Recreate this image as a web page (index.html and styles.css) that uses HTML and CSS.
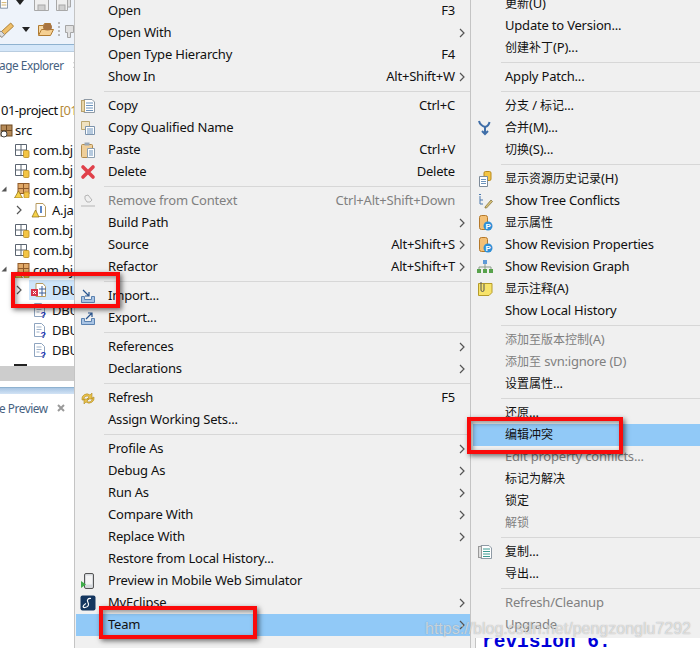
FILE: index.html
```html
<!DOCTYPE html>
<html lang="zh">
<head>
<meta charset="utf-8">
<title>Team menu</title>
<link rel="stylesheet" href="styles.css">
</head>
<body>
<svg class="defs" width="0" height="0">
  <defs>
    <symbol id="pkg" viewBox="0 0 16 16"><path d="M1.500 2.500h11v11h-11zM7 2.500v11M1.500 8h11" fill="#fff" stroke="#5a6470"/><rect x="9.500" y="8.500" width="5.500" height="7" rx="1" fill="#f3c545" stroke="#b98a1e" stroke-width=".8"/></symbol>
    <symbol id="pkgw" viewBox="0 0 16 16"><rect x="4" y="1.500" width="11" height="10" fill="#e0a867" stroke="#8f5a2a"/><path d="M9.500 1.500v10M4 6.500h11" stroke="#8f5a2a"/><path d="M4.500 9 8.500 16H.5z" fill="#f6d24a" stroke="#8a6b10" stroke-width=".7"/><rect x="10" y="10" width="5" height="6" rx="1" fill="#f3c545" stroke="#b98a1e" stroke-width=".8"/></symbol>
    <symbol id="unk" viewBox="0 0 16 16"><path d="M2.500 1.500h7l3 3v10h-10z" fill="#fff" stroke="#8ea4bf"/><path d="M4.500 5h5M4.500 7.500h5M4.500 10h3" stroke="#9fb3ca"/><text x="8.500" y="15.500" font-size="9" font-weight="700" fill="#1a2fb5" font-family="Liberation Sans">?</text></symbol>
    <symbol id="doc" viewBox="0 0 16 16"><path d="M4 1.500h8l2.500 2.500v10.500H4z" fill="#fff" stroke="#8f9aa5"/><rect x="1.500" y="2.500" width="3" height="11" fill="#e8d5a8" stroke="#b9a26d"/><path d="M6 5h7M6 7.500h7M6 10h7M6 12.500h7" stroke="#6d94bd"/></symbol>
    <symbol id="arrow" viewBox="0 0 6 10"><path d="M1 1l4 4-4 4" fill="none" stroke="#555" stroke-width="1.200"/></symbol>
    <symbol id="close" viewBox="0 0 8 8"><path d="M1 1l6 6M7 1L1 7" stroke="#9a9a9a" stroke-width="2"/></symbol>
  </defs>
</svg>
<div class="stage">
  <aside class="side">
    <div class="toolbar">
      <div class="tb-row tb-row-top">
        <svg class="tb-doc" viewBox="0 0 10 10"><path d="M.5-4h9v13h-9z" fill="#fff" stroke="#6a7c92"/><path d="M2 2h6M2 5h6" stroke="#c9a24a"/></svg>
        <span class="tb-tri"></span>
        <svg class="tb-save" viewBox="0 0 15 11"><path d="M.5-4h14v14.500H.5z" fill="#efefef" stroke="#a8a8a8"/><rect x="4" y="5" width="7" height="5.500" fill="#d0d0d0" stroke="#a8a8a8"/></svg>
        <svg class="tb-save" viewBox="0 0 15 11"><path d="M3.500-4h11v11h-11z" fill="#ddd" stroke="#a8a8a8"/><path d="M.5-2h11v12.500H.5z" fill="#efefef" stroke="#a8a8a8"/><rect x="3" y="5" width="6" height="5.500" fill="#d0d0d0" stroke="#a8a8a8"/></svg>
      </div>
      <div class="tb-row tb-row-main">
        <svg class="tb-pencil" viewBox="0 0 15 16"><path d="M-2 13l4 2.500L14.500 4l-3-3.500z" fill="#efbf6a" stroke="#a8782a"/><path d="M-2 12l3-3 4 4-3 3z" fill="#ddd" stroke="#888"/></svg>
        <span class="tb-tri"></span>
        <svg class="tb-open" viewBox="0 0 16 13"><path d="M.5 2.500h5l1-2h6v11H.5z" fill="#f6d9a6" stroke="#b07a30"/><path d="M.5 12.500l3-6h12l-3 6z" fill="#f4cf92" stroke="#b07a30"/><ellipse cx="9.500" cy="4" rx="4.500" ry="3.500" fill="#a87440"/></svg>
        <span class="tb-grip"></span>
        <svg class="tb-disabled" viewBox="0 0 10 16"><path d="M1.500 2.500h8v7h-3v5h-3v-5h-2z" fill="#e0e0e0" stroke="#a5a5a5"/></svg>
      </div>
      <div class="tb-foot"></div>
    </div>
    <div class="tab-row"><span class="tab-label">age Explorer</span><svg class="tab-x"><use href="#close"/></svg></div>
    <div class="tree">
      <div class="t-row t-project"><span>01-project</span> <span class="t-tag">[01</span></div>
      <div class="t-row t-l1"><svg class="t-ico" viewBox="0 0 16 16"><rect x="3" y="3" width="11" height="11" fill="#b58a58" stroke="#6f4a22"/><path d="M8.500 3v11M3 8.500h11" stroke="#6f4a22"/><circle cx="6" cy="12" r="3" fill="#fff" stroke="#444"/></svg><span>src</span></div>
      <div class="t-row t-l2"><svg class="t-ico"><use href="#pkg"/></svg><span>com.bj</span></div>
      <div class="t-row t-l2"><svg class="t-ico"><use href="#pkg"/></svg><span>com.bj</span></div>
      <div class="t-row t-l2"><svg class="t-chev" viewBox="0 0 6 6"><path d="M5.500.5v5h-5z" fill="#555"/></svg><svg class="t-ico"><use href="#pkgw"/></svg><span>com.bj</span></div>
      <div class="t-row t-l3"><svg class="t-arrow"><use href="#arrow"/></svg><svg class="t-ico" viewBox="0 0 16 16"><path d="M5 1.500h7l2.500 3v10H5z" fill="#fff" stroke="#b79a5e"/><path d="M4.500 8 8 15H1z" fill="#f6d24a" stroke="#8a6b10" stroke-width=".7"/><path d="M10 4v7" stroke="#2a5fb0" stroke-width="1.500"/></svg><span>A.ja</span></div>
      <div class="t-row t-l2"><svg class="t-ico"><use href="#pkg"/></svg><span>com.bj</span></div>
      <div class="t-row t-l2"><svg class="t-ico"><use href="#pkg"/></svg><span>com.bj</span></div>
      <div class="t-row t-l2"><svg class="t-chev" viewBox="0 0 6 6"><path d="M5.500.5v5h-5z" fill="#555"/></svg><svg class="t-ico"><use href="#pkgw"/></svg><span>com.bj</span></div>
      <div class="t-row t-l3 t-sel"><svg class="t-arrow"><use href="#arrow"/></svg><svg class="t-ico" viewBox="0 0 16 16"><path d="M5 1.500h7l2.500 3v10H5z" fill="#fff" stroke="#b79a5e"/><rect x="0" y="7" width="7" height="7" fill="#d8324a"/><path d="M2 9l3 3M5 9l-3 3" stroke="#fff"/><path d="M8 7h7M11 4v10M8 11h7" stroke="#3a5f9a"/></svg><span>DBU</span></div>
      <div class="t-row t-l4"><svg class="t-ico"><use href="#unk"/></svg><span>DBU</span></div>
      <div class="t-row t-l4"><svg class="t-ico"><use href="#unk"/></svg><span>DBU</span></div>
      <div class="t-row t-l4"><svg class="t-ico"><use href="#unk"/></svg><span>DBU</span></div>
      <div class="t-row t-cut"><span class="t-cut-bar"></span></div>
    </div>
    <div class="scroll-band"></div>
    <div class="view-strip"></div>
    <div class="tab-row tab-row-2"><span class="tab-label">e Preview</span><svg class="tab-x"><use href="#close"/></svg></div>
  </aside>

  <nav class="menu menu-main">
    <div class="item"><span class="label">Open</span><span class="key">F3</span></div>
    <div class="item"><span class="label">Open With</span><svg class="more"><use href="#arrow"/></svg></div>
    <div class="item"><span class="label">Open Type Hierarchy</span><span class="key">F4</span></div>
    <div class="item"><span class="label">Show In</span><span class="key">Alt+Shift+W</span><svg class="more"><use href="#arrow"/></svg></div>
    <div class="sep"></div>
    <div class="item"><svg class="ico"><use href="#doc"/></svg><span class="label">Copy</span><span class="key">Ctrl+C</span></div>
    <div class="item"><svg class="ico" viewBox="0 0 16 16"><path d="M1.500 1.500h8v8h-8z" fill="#f0e2c0" stroke="#bba670"/><path d="M5.500 6.500h9v8h-9z" fill="#fff" stroke="#7d94ad"/><path d="M7 9h6M7 11h6M7 13h6" stroke="#6d94bd"/></svg><span class="label">Copy Qualified Name</span></div>
    <div class="item"><svg class="ico" viewBox="0 0 16 16"><rect x="1.500" y="2.500" width="11" height="13" rx="1" fill="#efcf9a" stroke="#b08a4a"/><rect x="4.500" y=".5" width="5" height="3" fill="#9aa7b5"/><path d="M7.500 6.500h7v9h-7z" fill="#fff" stroke="#8fa0b0"/><path d="M9 9h4M9 11h4M9 13h4" stroke="#6d94bd"/></svg><span class="label">Paste</span><span class="key">Ctrl+V</span></div>
    <div class="item"><svg class="ico" viewBox="0 0 16 16"><path d="M3 3l10 10M13 3L3 13" stroke="#e0414a" stroke-width="3.600" stroke-linecap="round"/></svg><span class="label">Delete</span><span class="key">Delete</span></div>
    <div class="sep"></div>
    <div class="item off"><svg class="ico" viewBox="0 0 16 16"><path d="M5 3l3-1 4 5-2 2H7L5 6zM1 13h14" fill="none" stroke="#b5b5b5"/></svg><span class="label">Remove from Context</span><span class="key">Ctrl+Alt+Shift+Down</span></div>
    <div class="item"><span class="label">Build Path</span><svg class="more"><use href="#arrow"/></svg></div>
    <div class="item"><span class="label">Source</span><span class="key">Alt+Shift+S</span><svg class="more"><use href="#arrow"/></svg></div>
    <div class="item"><span class="label">Refactor</span><span class="key">Alt+Shift+T</span><svg class="more"><use href="#arrow"/></svg></div>
    <div class="sep"></div>
    <div class="item"><svg class="ico" viewBox="0 0 16 16"><path d="M1.500 8.500v6h13v-6h-3v3h-7v-3z" fill="#a9c4e4" stroke="#5b82b0"/><path d="M3 2l6 6M9 4v4H5" fill="none" stroke="#28558f" stroke-width="1.200"/></svg><span class="label">Import...</span></div>
    <div class="item"><svg class="ico" viewBox="0 0 16 16"><path d="M1.500 8.500v6h13v-6h-3v3h-7v-3z" fill="#a9c4e4" stroke="#5b82b0"/><path d="M6 9l6-6M8 3h4v4" fill="none" stroke="#28558f" stroke-width="1.200"/></svg><span class="label">Export...</span></div>
    <div class="sep"></div>
    <div class="item"><span class="label">References</span><svg class="more"><use href="#arrow"/></svg></div>
    <div class="item"><span class="label">Declarations</span><svg class="more"><use href="#arrow"/></svg></div>
    <div class="sep"></div>
    <div class="item"><svg class="ico" viewBox="0 0 16 16"><path d="M2 10a5 5 0 0 1 8-5l2-2v6H7l2-2a3 3 0 0 0-5 3zM14 7a5 5 0 0 1-8 5l-2 2V9h5l-2 2a3 3 0 0 0 5-3z" fill="#e8c04a" stroke="#b08a20" stroke-width=".6"/></svg><span class="label">Refresh</span><span class="key">F5</span></div>
    <div class="item"><span class="label">Assign Working Sets...</span></div>
    <div class="sep"></div>
    <div class="item"><span class="label">Profile As</span><svg class="more"><use href="#arrow"/></svg></div>
    <div class="item"><span class="label">Debug As</span><svg class="more"><use href="#arrow"/></svg></div>
    <div class="item"><span class="label">Run As</span><svg class="more"><use href="#arrow"/></svg></div>
    <div class="item"><span class="label">Compare With</span><svg class="more"><use href="#arrow"/></svg></div>
    <div class="item"><span class="label">Replace With</span><svg class="more"><use href="#arrow"/></svg></div>
    <div class="item"><span class="label">Restore from Local History...</span></div>
    <div class="item"><svg class="ico" viewBox="0 0 16 16"><rect x="4.500" y=".5" width="9" height="15" rx="1.500" fill="#d5d8dc" stroke="#555"/><rect x="6" y="2.500" width="6" height="9" fill="#f4f4f4"/><path d="M1 8l5 3.500L1 15z" fill="#3fae4a"/></svg><span class="label">Preview in Mobile Web Simulator</span></div>
    <div class="item"><svg class="ico" viewBox="0 0 16 16"><rect x=".5" y=".5" width="15" height="15" rx="2" fill="#14365f"/><path d="M11 3.500C8 3 6.500 5 8 7.500S8 12 5 12.500 3 10 6 8.500" fill="none" stroke="#fff" stroke-width="1.200"/></svg><span class="label">MyEclipse</span><svg class="more"><use href="#arrow"/></svg></div>
    <div class="item hot"><span class="label">Team</span><svg class="more"><use href="#arrow"/></svg></div>
  </nav>

  <nav class="menu menu-sub">
    <div class="item"><span class="label"><span class="cjk">更新</span>(U)</span></div>
    <div class="item"><span class="label">Update to Version...</span></div>
    <div class="item"><span class="label"><span class="cjk">创建补丁</span>(P)...</span></div>
    <div class="sep"></div>
    <div class="item"><span class="label">Apply Patch...</span></div>
    <div class="sep"></div>
    <div class="item"><span class="label"><span class="cjk">分支</span> / <span class="cjk">标记</span>...</span></div>
    <div class="item"><svg class="ico" viewBox="0 0 16 16"><path d="M2 1c1 4 3 5 6 6 2-.5 4-2 4.500-5M8 7v7M5 11l3 3 3-3" fill="none" stroke="#3f6ea8" stroke-width="2"/></svg><span class="label"><span class="cjk">合并</span>(M)...</span></div>
    <div class="item"><span class="label"><span class="cjk">切换</span>(S)...</span></div>
    <div class="sep"></div>
    <div class="item"><svg class="ico" viewBox="0 0 16 16"><rect x="7" y="0.500" width="7" height="9" rx="1.500" fill="#f3c545" stroke="#b98a1e"/><path d="M2.500 5.500h8v10h-8z" fill="#fff" stroke="#7d8a98"/><path d="M4 8.500h5M4 10.500h5M4 12.500h5" stroke="#6d94bd"/></svg><span class="label"><span class="cjk">显示资源历史记录</span>(H)</span></div>
    <div class="item"><svg class="ico" viewBox="0 0 16 16"><path d="M2 1.500h2M3 3v8h3M3 7h3" fill="none" stroke="#4a78ad"/><path d="M8 14l6-7 1.500 1.500-6 6.500H8z" fill="#d8c27a" stroke="#7d6a30" stroke-width=".7"/></svg><span class="label">Show Tree Conflicts</span></div>
    <div class="item"><svg class="ico" viewBox="0 0 16 16"><rect x="2.500" y=".5" width="8" height="14" rx="2" fill="#f3c076" stroke="#b5792a"/><circle cx="11" cy="11" r="4.500" fill="#2f8fd6"/><text x="11" y="14" text-anchor="middle" font-size="8" font-weight="700" fill="#fff" font-family="Liberation Sans">P</text></svg><span class="label"><span class="cjk">显示属性</span></span></div>
    <div class="item"><svg class="ico" viewBox="0 0 16 16"><rect x="2.500" y=".5" width="8" height="14" rx="2" fill="#f3c076" stroke="#b5792a"/><circle cx="11" cy="11" r="4.500" fill="#2f8fd6"/><text x="11" y="14" text-anchor="middle" font-size="8" font-weight="700" fill="#fff" font-family="Liberation Sans">P</text></svg><span class="label">Show Revision Properties</span></div>
    <div class="item"><svg class="ico" viewBox="0 0 16 16"><rect x="6" y="1" width="4" height="4" fill="#5f9bd8"/><path d="M8 5v3M2 8h12v2M2 8v2M8 8v2" fill="none" stroke="#8a9a8a"/><rect x="0" y="10" width="4" height="4" fill="#58a24c"/><rect x="6" y="10" width="4" height="4" fill="#58a24c"/><rect x="12" y="10" width="4" height="4" fill="#58a24c"/></svg><span class="label">Show Revision Graph</span></div>
    <div class="item"><svg class="ico" viewBox="0 0 16 16"><path d="M1.500 2.500h13.500v9l-3 3H1.500z" fill="#f7e36a" stroke="#b59b2a"/><path d="M4 1v8a1.500 1.500 0 0 0 3 0V3" fill="none" stroke="#555"/></svg><span class="label"><span class="cjk">显示注释</span>(A)</span></div>
    <div class="item"><span class="label">Show Local History</span></div>
    <div class="sep"></div>
    <div class="item off"><span class="label"><span class="cjk">添加至版本控制</span>(A)</span></div>
    <div class="item off"><span class="label"><span class="cjk">添加至</span> svn:ignore (D)</span></div>
    <div class="item"><span class="label"><span class="cjk">设置属性</span>...</span></div>
    <div class="sep"></div>
    <div class="item"><span class="label"><span class="cjk">还原</span>...</span></div>
    <div class="item hot"><span class="label"><span class="cjk">编辑冲突</span></span></div>
    <div class="item off"><span class="label">Edit property conflicts...</span></div>
    <div class="item"><span class="label"><span class="cjk">标记为解决</span></span></div>
    <div class="item"><span class="label"><span class="cjk">锁定</span></span></div>
    <div class="item off"><span class="label"><span class="cjk">解锁</span></span></div>
    <div class="sep"></div>
    <div class="item"><svg class="ico" viewBox="0 0 16 16"><path d="M4 1.500h8l2.500 2.500v10.500H4z" fill="#fff" stroke="#8f9aa5"/><rect x="1.500" y="2.500" width="3" height="11" fill="#ddd" stroke="#999"/><path d="M6 5h7M6 7.500h7M6 10h7M6 12.500h7" stroke="#3d9a92"/></svg><span class="label"><span class="cjk">复制</span>...</span></div>
    <div class="item"><span class="label"><span class="cjk">导出</span>...</span></div>
    <div class="sep"></div>
    <div class="item off"><span class="label">Refresh/Cleanup</span></div>
    <div class="item off"><span class="label">Upgrade</span></div>
    <div class="code-peek">revision 6.</div>
  </nav>

  <div class="mark mark-tree"></div>
  <div class="mark mark-team"></div>
  <div class="mark mark-edit"></div>
  <div class="watermark">https://blog.csdn.net/pengzonglu7292</div>
</div>
</body>
</html>
```
FILE: styles.css
```css
* { box-sizing: border-box; }
html, body { margin: 0; height: 100%; overflow: hidden; background: #fff; }
.defs { position: absolute; }
.stage {
  position: relative;
  display: flex;
  width: 700px;
  height: 648px;
  overflow: hidden;
  font-family: "Noto Sans", "Noto Sans CJK SC", sans-serif;
  font-size: 13px;
  letter-spacing: -.2px;
  color: #111;
}
.cjk { font-family: "Noto Sans CJK SC", sans-serif; font-size: 12px; letter-spacing: 0; }
.side { width: 74px; flex: none; display: flex; flex-direction: column; background: #fff; overflow: hidden; }
.toolbar { height: 52px; background: #eef3fa; overflow: hidden; display: flex; flex-direction: column; }
.tb-row { display: flex; flex: none; }
.tb-row-top { height: 22px; }
.tb-doc { width: 8px; height: 10px; }
.tb-row-top .tb-tri { margin: 0 0 0 8px; }
.tb-row-top .tb-save:nth-of-type(2) { margin-left: 10px; }
.tb-save { width: 15px; height: 11px; margin-left: 7px; }
.tb-row-main { height: 22px; }
.tb-tri { width: 0; height: 0; border: 4px solid transparent; border-top: 5px solid #222; border-bottom: 0; flex: none; }
.tb-row-main .tb-tri { margin: 5px 0 0 8px; }
.tb-pencil { width: 14px; height: 16px; flex: none; }
.tb-open { width: 16px; height: 13px; margin: 1px 0 0 8px; flex: none; }
.tb-grip { width: 0; height: 14px; border-left: 2px dotted #b8b8b8; margin-left: 4px; }
.tb-disabled { width: 10px; height: 16px; margin: 1px 0 0 4px; flex: none; }
.tb-foot { height: 8px; background: #d5e7f9; border-top: 1px solid #8fb2d0; border-bottom: 1px solid #b9cde0; flex: none; }
.tab-row { height: 26px; display: flex; align-items: center; color: #46617f; white-space: nowrap; overflow: hidden; flex: none; }
.tab-label { font-size: 11.800px; letter-spacing: -.45px; margin-left: -1px; }
.tab-x { width: 8px; height: 8px; margin-left: 9px; flex: none; }
.tree { height: 288px; padding-top: 22px; overflow: hidden; flex: none; }
.t-row { height: 20px; display: flex; align-items: center; white-space: nowrap; position: relative; flex: none; }
.t-project { margin-left: 1px; letter-spacing: -.5px; }
.t-tag { color: #b58a3a; margin-left: 2px; }
.t-l1 { gap: 1px; margin-left: -2px; }
.t-l2 { padding-left: 14px; gap: 3px; }
.t-l3 { padding-left: 16px; gap: 5px; }
.t-l4 { padding-left: 32px; gap: 4px; }
.t-chev { position: absolute; left: 1px; top: 6px; width: 6px; height: 6px; }
.t-ico { width: 16px; height: 16px; flex: none; }
.t-arrow { width: 6px; height: 10px; flex: none; margin-right: 4px; }
.t-sel { background: linear-gradient(90deg, transparent 29px, #cfe6fb 29px); }
.t-cut { padding-left: 14px; align-items: flex-start; padding-top: 4px; }
.t-cut-bar { width: 13px; height: 2px; background: #222; }
.scroll-band { height: 15px; background: #cdcdcd; flex: none; }
.view-strip { height: 7px; margin-top: 6px; background: linear-gradient(#a8c5e3, #d2e3f5); border-top: 1px solid #8fb2d0; flex: none; }
.tab-row-2 { height: 28px; }
.tab-row-2 .tab-x { margin-left: 9px; }
.menu { background: #f0f0f0; flex: none; }
.menu-main { width: 396px; border-left: 1px solid #c4c4c4; padding-left: 1px; }
.menu-sub { width: 230px; margin-top: -7px; border-left: 1px solid #c4c4c4; padding-left: 2px; position: relative; }
.item { height: 22px; display: flex; align-items: center; padding: 0 8px 2px 32px; position: relative; white-space: nowrap; }
.item .ico { position: absolute; left: 4px; top: 3px; width: 16px; height: 16px; }
.item .label { flex: 1; }
.item .key { margin-right: 7px; }
.item .more { position: absolute; right: 5px; top: 6px; width: 6px; height: 10px; }
.off { color: #808080; }
.hot { background: #91c9f7; }
.sep { height: 7px; margin-left: 28px; position: relative; }
.sep::after { content: ""; position: absolute; left: 0; right: 0; top: 3px; height: 1px; background: #d7d7d7; }
.code-peek {
  position: absolute;
  left: 4px;
  top: 645px;
  width: 225px;
  height: 12px;
  padding-left: 6px;
  overflow: hidden;
  background: #fff;
  border-left: 1px solid #c4c4c4;
  color: #0000d8;
  font: 700 19.500px/9px "Liberation Mono", monospace;
  letter-spacing: 0;
  white-space: nowrap;
}
.mark { position: absolute; border: 4px solid #fa0a0a; box-shadow: 2px 2px 5px rgba(0, 0, 0, .55), inset 2px 2px 5px rgba(0, 0, 0, .4); }
.mark-tree { left: 11px; top: 272px; width: 109px; height: 36px; }
.mark-team { left: 99px; top: 606px; width: 158px; height: 33px; }
.mark-edit { left: 467px; top: 417px; width: 156px; height: 37px; }
.watermark {
  position: absolute;
  left: 425px;
  top: 618px;
  color: rgba(255, 255, 255, .6);
  font-family: "Liberation Sans", sans-serif;
  font-size: 16px;
  letter-spacing: 0;
  line-height: 22px;
  white-space: nowrap;
  text-shadow: 0 0 1px rgba(90, 90, 90, .55);
}
```
